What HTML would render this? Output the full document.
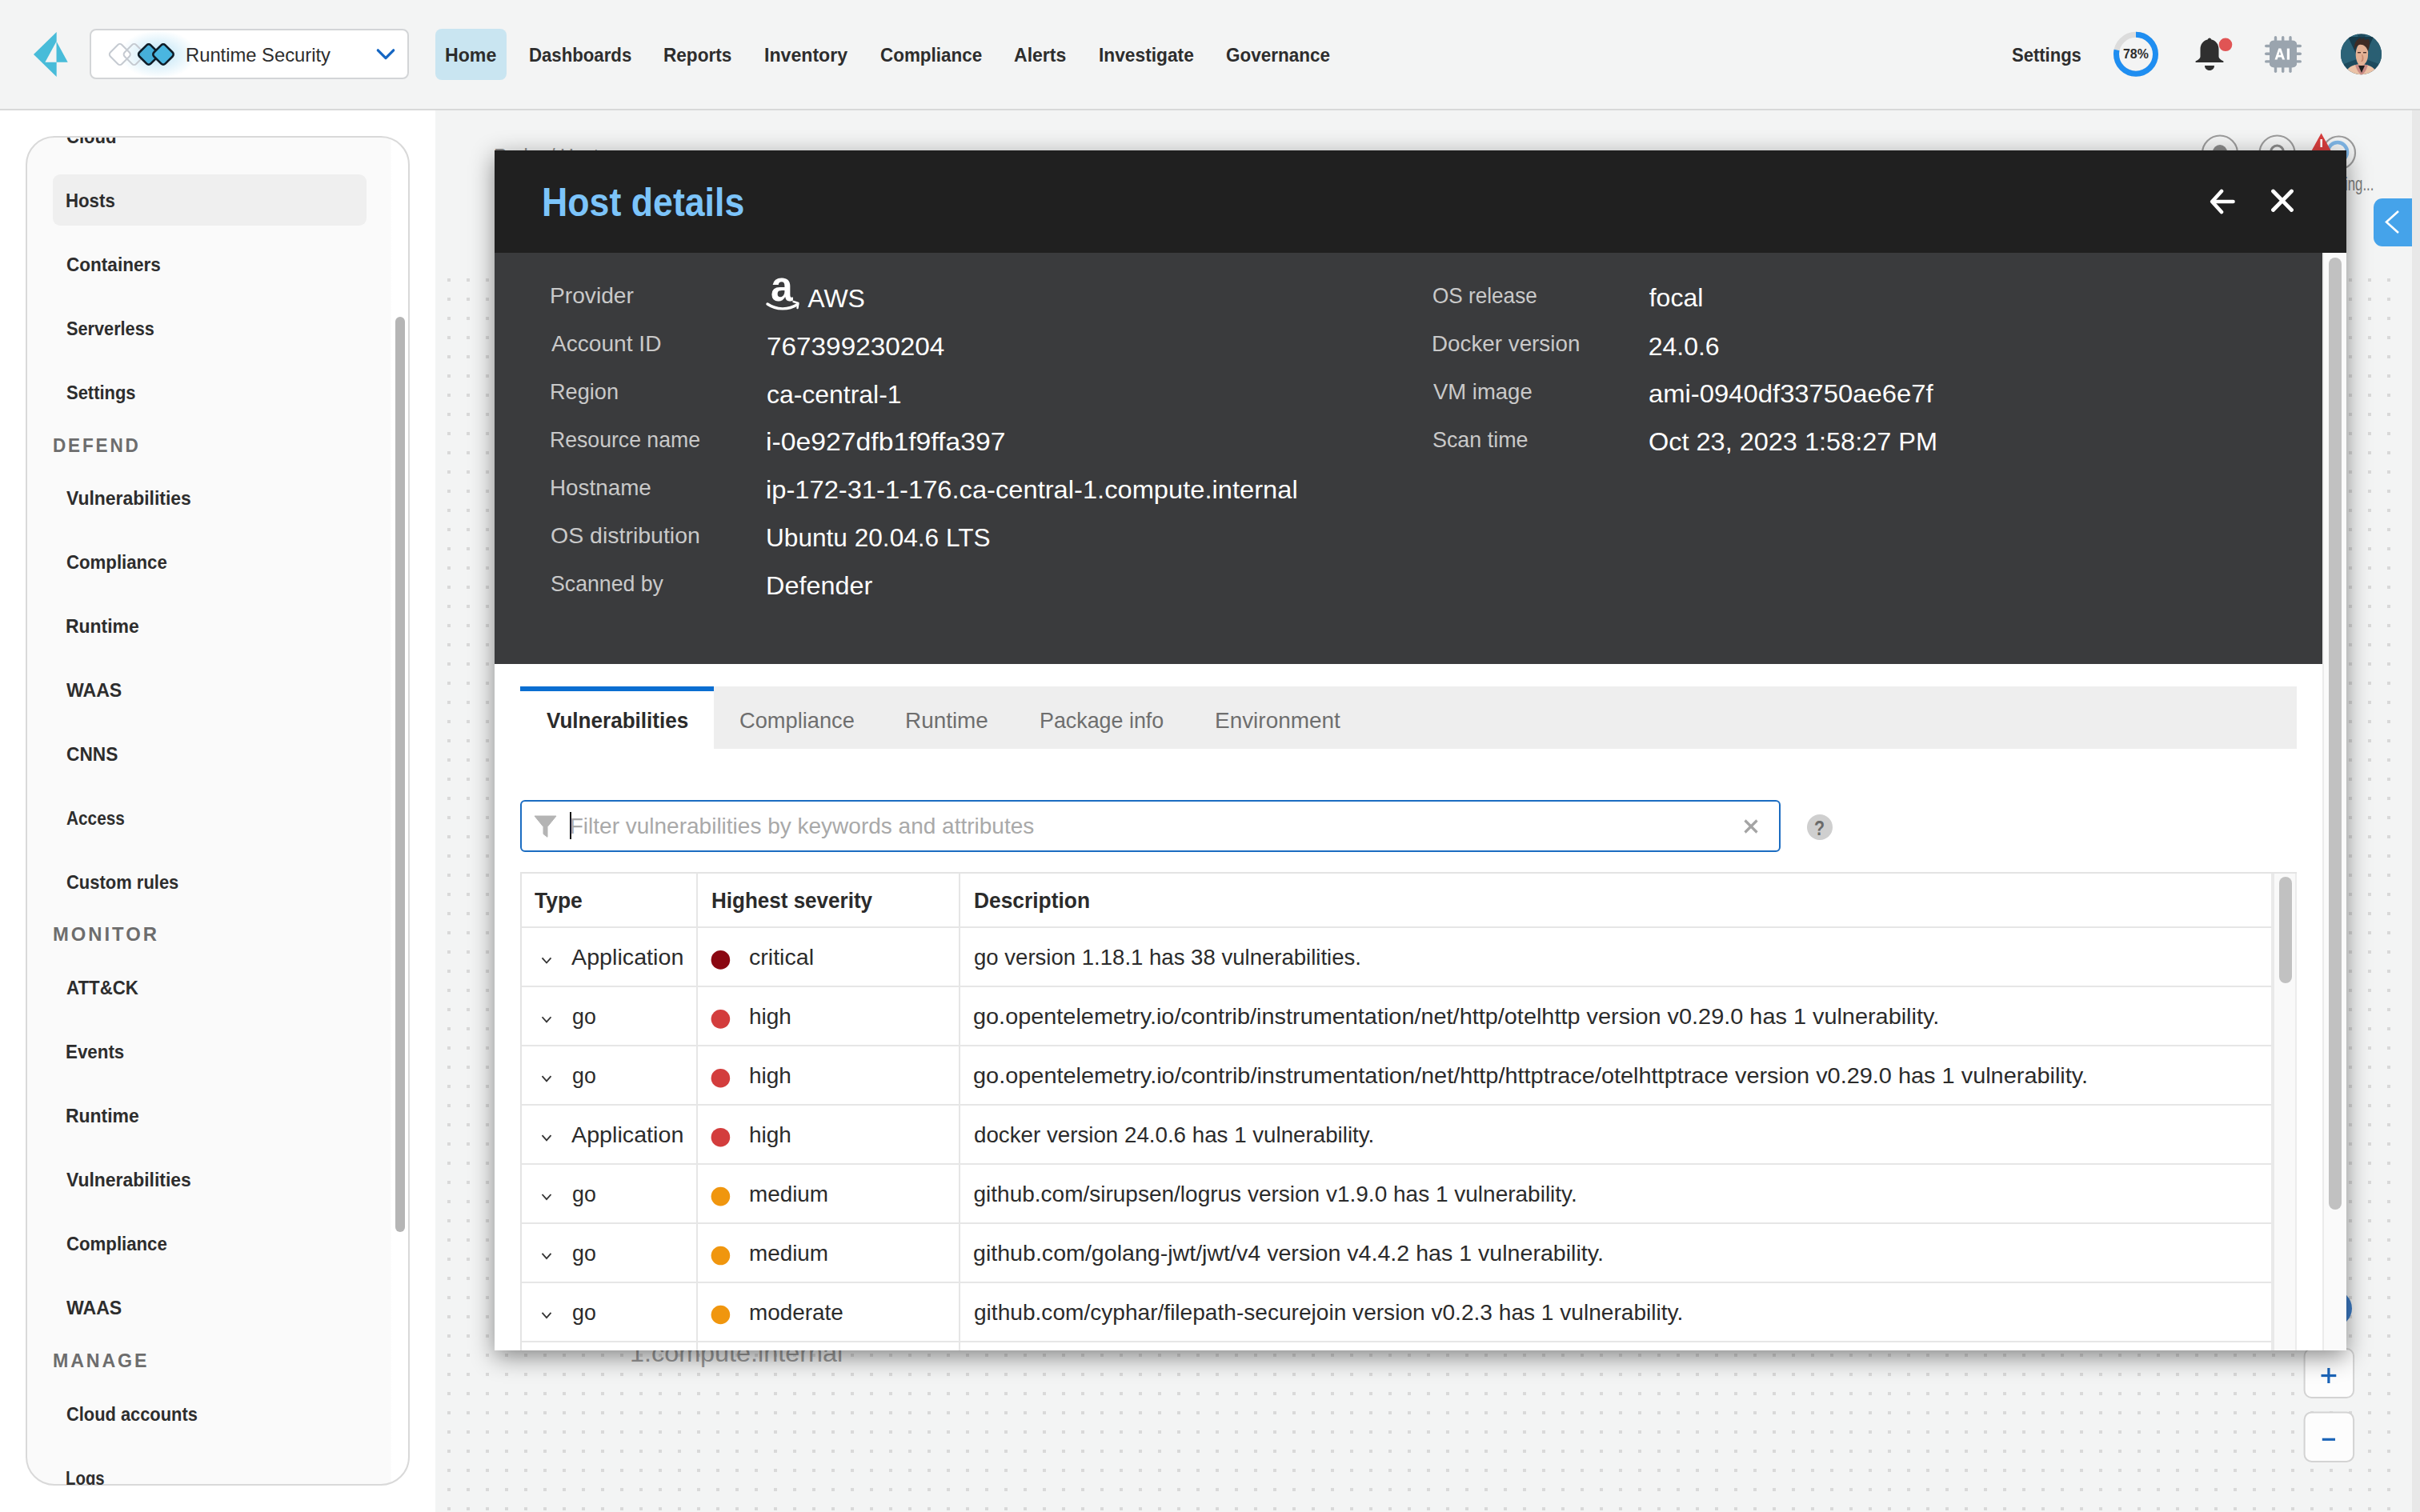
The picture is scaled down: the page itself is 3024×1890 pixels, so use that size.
<!DOCTYPE html>
<html><head><meta charset="utf-8"><title>Host details</title>
<style>
html,body{margin:0;padding:0}
body{width:3024px;height:1890px;position:relative;overflow:hidden;background:#ffffff;font-family:"Liberation Sans",sans-serif}
.a{position:absolute}
.t{position:absolute;white-space:nowrap;line-height:1;transform-origin:0 0;font-family:"Liberation Sans",sans-serif}
svg{position:absolute;overflow:visible}
</style></head><body>
<!-- ============ HEADER ============ -->
<div class="a" style="left:0;top:0;width:3024px;height:136px;background:#f3f4f4"></div>
<div class="a" style="left:0;top:136px;width:3024px;height:2px;background:#d8d9d9"></div>
<svg style="left:0;top:0" width="100" height="110">
 <polygon points="42,68 70.7,40 70.7,96" fill="#48bcd9"/>
 <polygon points="56.4,77.8 70.7,51.6 70.7,77.8" fill="#f3f4f4"/>
 <polygon points="70.7,52.1 84.7,77.8 70.7,77.8" fill="#48bcd9"/>
</svg>
<div class="a" style="left:112px;top:36px;width:395px;height:59px;border:2px solid #d3d5d7;border-radius:8px;background:#fff"></div>
<div class="a" style="left:150px;top:38px;width:96px;height:60px;background:radial-gradient(ellipse 48px 30px at 50% 50%,rgba(110,195,235,.55) 0%,rgba(110,195,235,.25) 45%,rgba(110,195,235,0) 100%)"></div>
<svg style="left:0;top:0" width="260" height="110">
 <g transform="translate(149.8,68) rotate(45)"><rect x="-10.2" y="-10.2" width="20.4" height="20.4" rx="3.5" fill="#fff" stroke="#c5cad1" stroke-width="2"/></g>
 <g transform="translate(167.6,68) rotate(45)"><rect x="-10.2" y="-10.2" width="20.4" height="20.4" rx="3.5" fill="none" stroke="#c5cad1" stroke-width="2"/></g>
 <g transform="translate(185.8,68) rotate(45)"><rect x="-10" y="-10" width="20" height="20" rx="3.5" fill="#46afd9" stroke="#0f1c27" stroke-width="2.6"/></g>
 <g transform="translate(204,68) rotate(45)"><rect x="-10" y="-10" width="20" height="20" rx="3.5" fill="#4ab6e0" stroke="#0f1c27" stroke-width="2.6"/></g>
 <polyline points="472.3,62.8 482,72.6 491.7,62.8" fill="none" stroke="#1667c3" stroke-width="3.3" stroke-linecap="round" stroke-linejoin="round"/>
</svg>
<div class="a" style="left:544px;top:36px;width:89px;height:64px;border-radius:8px;background:#c9e5f1"></div>
<svg style="left:2637px;top:36px" width="64" height="64">
 <circle cx="32" cy="31.75" r="24.5" fill="none" stroke="#dcdcdc" stroke-width="7"/>
 <circle cx="32" cy="31.75" r="24.5" fill="none" stroke="#1f8ef1" stroke-width="7" stroke-dasharray="120.1 200" transform="rotate(-90 32 31.75)"/>
</svg>
<svg style="left:2740px;top:44px" width="52" height="48">
 <path d="M21,3.6 C19.6,3.6 19,4.6 18.6,5.6 C13,6.8 9.5,11.5 9.5,17.5 L9.5,26.8 C9.5,28.8 7.5,30.6 4,32.3 C3,32.8 3.2,34 4.4,34 L37.6,34 C38.8,34 39,32.8 38,32.3 C34.5,30.6 32.5,28.8 32.5,26.8 L32.5,17.5 C32.5,11.5 29,6.8 23.4,5.6 C23,4.6 22.4,3.6 21,3.6 Z" fill="#2f2f2f"/>
 <path d="M15,38 L27,38 C27,41.5 24.5,44 21,44 C17.5,44 15,41.5 15,38 Z" fill="#2f2f2f"/>
 <circle cx="41" cy="11.8" r="8.3" fill="#e05454"/>
</svg>
<svg style="left:2826px;top:40px" width="56" height="56">
 <g fill="#9aa4ae">
  <rect x="10" y="10.8" width="34" height="33.5" rx="5"/>
  <rect x="15.8" y="5" width="3.4" height="46" rx="1.7"/>
  <rect x="25" y="5" width="3.4" height="46" rx="1.7"/>
  <rect x="34.3" y="5" width="3.4" height="46" rx="1.7"/>
  <rect x="4" y="15.8" width="46" height="3.4" rx="1.7"/>
  <rect x="4" y="25.5" width="46" height="3.4" rx="1.7"/>
  <rect x="4" y="35.2" width="46" height="3.4" rx="1.7"/>
  <rect x="10" y="10.8" width="34" height="33.5" rx="5"/>
 </g>
 <path d="M16.5,34.6 L21.3,20.6 L24.3,20.6 L29.1,34.6 L26,34.6 L25,31.4 L20.6,31.4 L19.6,34.6 Z M21.4,28.8 L24.2,28.8 L22.8,24.2 Z" fill="#fff"/>
 <rect x="31.8" y="20.6" width="3.2" height="14" fill="#fff"/>
</svg>
<svg style="left:2924px;top:42px" width="54" height="54">
 <defs>
  <clipPath id="avc"><circle cx="26.5" cy="25.8" r="25.5"/></clipPath>
 </defs>
 <circle cx="26.5" cy="25.8" r="25.5" fill="#1d4a5d"/>
 <g clip-path="url(#avc)">
  <polygon points="0,0 22,0 26,30 0,40" fill="#2c6378"/>
  <polygon points="54,0 32,0 27,30 54,40" fill="#2a5f73"/>
  <polygon points="10,4 26,38 42,4" fill="#163b4b"/>
  <path d="M6,54 C7,44 13,39 26,38 C39,39 46,44 47,54 Z" fill="#ebc2a6"/>
  <path d="M19,39 C21,46 24,50 27,52 C30,50 33,46 35,39 Z" fill="#c98b85"/>
  <path d="M23,40 L27,49 L31,40 Z" fill="#1e1e1e"/>
  <path d="M20,30 C19,22 21,13 27,12 C33,12 36,19 35,27 C35,33 32,39 27,40 C23,40 21,36 20,30 Z" fill="#e3b194"/>
  <path d="M27,26 C28,30 28,33 26,35 L28,35 C30,33 30,29 28,26 Z" fill="#c98a70"/>
  <path d="M18,20 C17,12 21,6 27,5 L25,8 L31,5 L30,8 L36,7 C38,11 37,17 35,22 C33,16 29,13 24,14 C21,15 19,17 18,20 Z" fill="#3e2b24"/>
  <rect x="22" y="23" width="4" height="1.4" fill="#4a302a"/><rect x="29" y="23" width="4" height="1.4" fill="#4a302a"/>
 </g>
</svg>
<div class="t" style="left:556.04px;top:56.72px;font-size:24px;font-weight:700;color:#2d2d2d;transform:scaleX(0.9643)">Home</div>
<div class="t" style="left:660.83px;top:56.72px;font-size:24px;font-weight:700;color:#2d2d2d;transform:scaleX(0.9246)">Dashboards</div>
<div class="t" style="left:829.06px;top:56.72px;font-size:24px;font-weight:700;color:#2d2d2d;transform:scaleX(0.9403)">Reports</div>
<div class="t" style="left:954.79px;top:56.72px;font-size:24px;font-weight:700;color:#2d2d2d;transform:scaleX(0.9635)">Inventory</div>
<div class="t" style="left:1099.60px;top:56.72px;font-size:24px;font-weight:700;color:#2d2d2d;transform:scaleX(0.9345)">Compliance</div>
<div class="t" style="left:1267.00px;top:56.72px;font-size:24px;font-weight:700;color:#2d2d2d;transform:scaleX(0.9604)">Alerts</div>
<div class="t" style="left:1372.55px;top:56.72px;font-size:24px;font-weight:700;color:#2d2d2d;transform:scaleX(0.9473)">Investigate</div>
<div class="t" style="left:1532.00px;top:56.72px;font-size:24px;font-weight:700;color:#2d2d2d;transform:scaleX(0.9366)">Governance</div>
<div class="t" style="left:2513.50px;top:56.72px;font-size:24px;font-weight:700;color:#2d2d2d;transform:scaleX(0.9170)">Settings</div>
<div class="t" style="left:231.51px;top:56.72px;font-size:24px;font-weight:400;color:#2d2d2d;transform:scaleX(0.9905)">Runtime Security</div>
<div class="t" style="left:2653.00px;top:58.84px;font-size:17px;font-weight:700;color:#2d2d2d;transform:scaleX(0.9349)">78%</div>
<!-- ============ LEFT SIDEBAR ============ -->
<div class="a" style="left:32px;top:170px;width:476px;height:1683px;border:2px solid #d9d9d9;border-radius:36px;background:linear-gradient(90deg,#fafafa 0,#fafafa 454px,#ffffff 455px)"></div>
<div class="a" style="left:66px;top:218px;width:392px;height:64px;border-radius:9px;background:#efefef"></div>
<div class="a" style="left:494px;top:396px;width:12px;height:1144px;border-radius:6px;background:#b5b5b5"></div>
<div class="a" style="left:0;top:0;width:544px;height:1890px;clip-path:inset(172px 0 34px 0)">
<div class="t" style="left:82.50px;top:158.72px;font-size:24px;font-weight:700;color:#2d2d2d;transform:scaleX(0.9210)">Cloud</div>
<div class="t" style="left:81.57px;top:238.72px;font-size:24px;font-weight:700;color:#2d2d2d;transform:scaleX(0.9260)">Hosts</div>
<div class="t" style="left:82.50px;top:318.72px;font-size:24px;font-weight:700;color:#2d2d2d;transform:scaleX(0.9399)">Containers</div>
<div class="t" style="left:82.50px;top:398.72px;font-size:24px;font-weight:700;color:#2d2d2d;transform:scaleX(0.9043)">Serverless</div>
<div class="t" style="left:82.50px;top:478.72px;font-size:24px;font-weight:700;color:#2d2d2d;transform:scaleX(0.9144)">Settings</div>
<div class="t" style="left:82.50px;top:610.72px;font-size:24px;font-weight:700;color:#2d2d2d;transform:scaleX(0.9551)">Vulnerabilities</div>
<div class="t" style="left:82.50px;top:690.72px;font-size:24px;font-weight:700;color:#2d2d2d;transform:scaleX(0.9249)">Compliance</div>
<div class="t" style="left:81.54px;top:770.72px;font-size:24px;font-weight:700;color:#2d2d2d;transform:scaleX(0.9561)">Runtime</div>
<div class="t" style="left:82.50px;top:850.72px;font-size:24px;font-weight:700;color:#2d2d2d;transform:scaleX(0.9619)">WAAS</div>
<div class="t" style="left:82.50px;top:930.72px;font-size:24px;font-weight:700;color:#2d2d2d;transform:scaleX(0.9449)">CNNS</div>
<div class="t" style="left:82.50px;top:1010.72px;font-size:24px;font-weight:700;color:#2d2d2d;transform:scaleX(0.8660)">Access</div>
<div class="t" style="left:82.50px;top:1090.72px;font-size:24px;font-weight:700;color:#2d2d2d;transform:scaleX(0.9149)">Custom rules</div>
<div class="t" style="left:82.50px;top:1223.22px;font-size:24px;font-weight:700;color:#2d2d2d;transform:scaleX(0.9279)">ATT&amp;CK</div>
<div class="t" style="left:81.57px;top:1303.22px;font-size:24px;font-weight:700;color:#2d2d2d;transform:scaleX(0.9308)">Events</div>
<div class="t" style="left:81.54px;top:1383.22px;font-size:24px;font-weight:700;color:#2d2d2d;transform:scaleX(0.9561)">Runtime</div>
<div class="t" style="left:82.50px;top:1463.22px;font-size:24px;font-weight:700;color:#2d2d2d;transform:scaleX(0.9551)">Vulnerabilities</div>
<div class="t" style="left:82.50px;top:1543.22px;font-size:24px;font-weight:700;color:#2d2d2d;transform:scaleX(0.9249)">Compliance</div>
<div class="t" style="left:82.50px;top:1623.22px;font-size:24px;font-weight:700;color:#2d2d2d;transform:scaleX(0.9619)">WAAS</div>
<div class="t" style="left:82.50px;top:1755.72px;font-size:24px;font-weight:700;color:#2d2d2d;transform:scaleX(0.9100)">Cloud accounts</div>
<div class="t" style="left:81.65px;top:1835.72px;font-size:24px;font-weight:700;color:#2d2d2d;transform:scaleX(0.8485)">Logs</div>
<div class="t" style="left:66.06px;top:544.72px;font-size:24px;font-weight:700;color:#6d6d6d;letter-spacing:3px;transform:scaleX(0.9391)">DEFEND</div>
<div class="t" style="left:66.01px;top:1156.22px;font-size:24px;font-weight:700;color:#6d6d6d;letter-spacing:3px;transform:scaleX(0.9919)">MONITOR</div>
<div class="t" style="left:66.03px;top:1689.22px;font-size:24px;font-weight:700;color:#6d6d6d;letter-spacing:3px;transform:scaleX(0.9656)">MANAGE</div>
</div>
<!-- ============ MAIN CANVAS ============ -->
<div class="a" style="left:544px;top:138px;width:2470px;height:1752px;background:#f3f4f4"></div>
<svg style="left:544px;top:340px" width="2456" height="1550">
 <defs><pattern id="dots" x="15" y="8" width="24" height="24" patternUnits="userSpaceOnUse"><rect width="4" height="4" fill="#d9d9d9"/></pattern></defs>
 <rect width="2456" height="1550" fill="url(#dots)"/>
</svg>
<div class="a" style="left:3014px;top:138px;width:10px;height:1752px;background:#e8e8e8"></div>
<svg style="left:2700px;top:150px" width="300" height="100">
 <circle cx="74" cy="41.5" r="22" fill="none" stroke="#9c9c9c" stroke-width="2.2"/>
 <circle cx="74" cy="40" r="9" fill="#8a8a8a"/>
 <circle cx="145.5" cy="41.5" r="22" fill="none" stroke="#9c9c9c" stroke-width="2.2"/>
 <circle cx="145.5" cy="40" r="8" fill="none" stroke="#8a8a8a" stroke-width="3"/>
 <circle cx="222.5" cy="41" r="20.5" fill="none" stroke="#9c9c9c" stroke-width="2.2"/>
 <circle cx="221" cy="40" r="12" fill="none" stroke="#7fb6e6" stroke-width="4.5"/>
 <polygon points="200.6,16.5 213,39 188.2,39" fill="#d83e3e"/>
 <rect x="199.4" y="24" width="2.6" height="10" fill="#fff"/>
</svg>
<div class="a" style="left:2966px;top:248px;width:48px;height:60px;border-radius:11px 0 0 11px;background:#45a3ea"></div>
<svg style="left:2960px;top:240px" width="60" height="80">
 <polyline points="37,24 22,37.5 37,51" fill="none" stroke="#fff" stroke-width="2.6"/>
</svg>
<svg style="left:2870px;top:1600px" width="100" height="240">
 <circle cx="46" cy="35.5" r="23" fill="#3d7cc6"/>
 <rect x="9.6" y="86" width="61.5" height="61" rx="9" fill="#fdfdfd" stroke="#d3d3d3" stroke-width="2"/>
 <rect x="9.6" y="165.4" width="61.5" height="61.5" rx="9" fill="#fdfdfd" stroke="#d3d3d3" stroke-width="2"/>
 <line x1="30.5" y1="119.5" x2="49.3" y2="119.5" stroke="#1b64b8" stroke-width="3.2"/>
 <line x1="39.9" y1="110" x2="39.9" y2="129" stroke="#1b64b8" stroke-width="3.2"/>
 <line x1="31.8" y1="199.3" x2="48" y2="199.3" stroke="#1b64b8" stroke-width="3.2"/>
</svg>
<div class="t" style="left:616.70px;top:181.53px;font-size:26px;font-weight:400;color:#8a8a8a;transform:scaleX(0.8984)">Radar / Hosts</div>
<div class="t" style="left:2930.00px;top:217.72px;font-size:24px;font-weight:400;color:#7a7a7a;transform:scaleX(0.6989)">ing...</div>
<div class="t" style="left:787.48px;top:1675.46px;font-size:32px;font-weight:400;color:#9a9a9a;transform:scaleX(1.0110)">1.compute.internal</div>
<!-- ============ MODAL ============ -->
<div class="a" style="left:618px;top:188px;width:2314px;height:1500px;background:#fff;box-shadow:0 8px 28px rgba(0,0,0,.45)"></div>
<div class="a" style="left:618px;top:188px;width:2314px;height:1500px;overflow:hidden;background:#fff">
<div class="a" style="left:-618px;top:-188px;width:3024px;height:1890px">
 <div class="a" style="left:618px;top:188px;width:2314px;height:128px;background:#202020"></div>
 <div class="a" style="left:618px;top:316px;width:2284px;height:514px;background:#3a3b3d"></div>
 <svg style="left:2740px;top:220px" width="150" height="64">
  <polyline points="36,19 24.2,32 36,45" fill="none" stroke="#fff" stroke-width="4.6" stroke-linecap="round" stroke-linejoin="round"/>
  <line x1="25" y1="32" x2="50.5" y2="32" stroke="#fff" stroke-width="4.6" stroke-linecap="round"/>
  <line x1="100.5" y1="19" x2="123.5" y2="42.5" stroke="#fff" stroke-width="4.8" stroke-linecap="round"/>
  <line x1="123.5" y1="19" x2="100.5" y2="42.5" stroke="#fff" stroke-width="4.8" stroke-linecap="round"/>
 </svg>
 <svg style="left:950px;top:340px" width="60" height="60">
  <path d="M9,40 C20,47.5 35,48 46.5,40.5" fill="none" stroke="#fff" stroke-width="3.4" stroke-linecap="round"/>
  <path d="M41.5,37 L47.5,38.8 L46.5,45" fill="none" stroke="#fff" stroke-width="2.4" stroke-linecap="round" stroke-linejoin="round"/>
 </svg>
 <div class="t" style="left:962.5px;top:330px;font-size:54px;font-weight:700;color:#fff;transform:scaleX(0.92)">a</div>
 <!-- scroll track -->
 <div class="a" style="left:2902px;top:316px;width:28px;height:1372px;border-left:2px solid #ebebeb;background:#fafafa"></div>
 <div class="a" style="left:2910px;top:322px;width:16px;height:1190px;border-radius:8px;background:#c1c1c1"></div>
 <!-- tabs -->
 <div class="a" style="left:650px;top:858px;width:2220px;height:78px;background:#eeeeee"></div>
 <div class="a" style="left:650px;top:858px;width:242px;height:78px;background:#ffffff"></div>
 <div class="a" style="left:650px;top:858px;width:242px;height:5.5px;background:#0a6ed1"></div>
 <!-- filter -->
 <div class="a" style="left:650px;top:1000px;width:1571px;height:61px;border:2px solid #1b6cc1;border-radius:6px;background:#fff"></div>
 <svg style="left:660px;top:1010px" width="44" height="44">
  <polygon points="8,10 35,10 24,23.5 24,36.3 19,32.5 19,23.5" fill="#b4b4b4" stroke="#b4b4b4" stroke-width="1" stroke-linejoin="round"/>
 </svg>
 <div class="a" style="left:712px;top:1015px;width:2px;height:34px;background:#141414"></div>
 <svg style="left:2170px;top:1015px" width="40" height="40">
  <line x1="10.5" y1="10.5" x2="25.5" y2="25.5" stroke="#a4a4a4" stroke-width="3.2"/>
  <line x1="25.5" y1="10.5" x2="10.5" y2="25.5" stroke="#a4a4a4" stroke-width="3.2"/>
 </svg>
 <div class="a" style="left:2257.75px;top:1018px;width:32px;height:32px;border-radius:50%;background:#cfcfcf"></div>
 <!-- table -->
 <div class="a" style="left:650px;top:1090px;width:2220px;height:2px;background:#e4e4e4"></div>
 <div class="a" style="left:650px;top:1090px;width:2px;height:600px;background:#e4e4e4"></div>
 <div class="a" style="left:2838px;top:1092px;width:4px;height:600px;background:#e9e9e9"></div>
 <div class="a" style="left:2842px;top:1092px;width:26px;height:600px;background:#f9f9f9"></div>
 <div class="a" style="left:2868px;top:1092px;width:2px;height:600px;background:#ececec"></div>
 <div class="a" style="left:2848px;top:1096px;width:16px;height:133px;border-radius:8px;background:#c1c1c1"></div>
 <div class="a" style="left:869.5px;top:1092px;width:2px;height:600px;background:#e6e6e6"></div>
 <div class="a" style="left:1197.75px;top:1092px;width:2px;height:600px;background:#e6e6e6"></div>
<div class="a" style="left:652px;top:1158.00px;width:2186px;height:2px;background:#e6e6e6"></div>
<div class="a" style="left:652px;top:1232.10px;width:2186px;height:2px;background:#e6e6e6"></div>
<div class="a" style="left:652px;top:1306.03px;width:2186px;height:2px;background:#e6e6e6"></div>
<div class="a" style="left:652px;top:1379.96px;width:2186px;height:2px;background:#e6e6e6"></div>
<div class="a" style="left:652px;top:1453.89px;width:2186px;height:2px;background:#e6e6e6"></div>
<div class="a" style="left:652px;top:1527.82px;width:2186px;height:2px;background:#e6e6e6"></div>
<div class="a" style="left:652px;top:1601.75px;width:2186px;height:2px;background:#e6e6e6"></div>
<div class="a" style="left:652px;top:1675.68px;width:2186px;height:2px;background:#e6e6e6"></div>
<svg style="left:0;top:0" width="3024" height="1890">
<polyline points="677.5,1197.30 683,1203.50 688.5,1197.30" fill="none" stroke="#333" stroke-width="1.8"/>
<circle cx="900.4" cy="1199.90" r="11.8" fill="#8a0812"/>
<polyline points="677.5,1271.23 683,1277.43 688.5,1271.23" fill="none" stroke="#333" stroke-width="1.8"/>
<circle cx="900.4" cy="1273.83" r="11.8" fill="#d33d3d"/>
<polyline points="677.5,1345.16 683,1351.36 688.5,1345.16" fill="none" stroke="#333" stroke-width="1.8"/>
<circle cx="900.4" cy="1347.76" r="11.8" fill="#d33d3d"/>
<polyline points="677.5,1419.09 683,1425.29 688.5,1419.09" fill="none" stroke="#333" stroke-width="1.8"/>
<circle cx="900.4" cy="1421.69" r="11.8" fill="#d33d3d"/>
<polyline points="677.5,1493.02 683,1499.22 688.5,1493.02" fill="none" stroke="#333" stroke-width="1.8"/>
<circle cx="900.4" cy="1495.62" r="11.8" fill="#f0960e"/>
<polyline points="677.5,1566.95 683,1573.15 688.5,1566.95" fill="none" stroke="#333" stroke-width="1.8"/>
<circle cx="900.4" cy="1569.55" r="11.8" fill="#f0960e"/>
<polyline points="677.5,1640.88 683,1647.08 688.5,1640.88" fill="none" stroke="#333" stroke-width="1.8"/>
<circle cx="900.4" cy="1643.48" r="11.8" fill="#f0960e"/>
</svg>
<div class="t" style="left:677.32px;top:228.25px;font-size:50px;font-weight:700;color:#7cc4fa;transform:scaleX(0.8938)">Host details</div>
<div class="t" style="left:686.74px;top:355.84px;font-size:28px;font-weight:400;color:#c9c9c9;transform:scaleX(1.0055)">Provider</div>
<div class="t" style="left:688.75px;top:416.34px;font-size:28px;font-weight:400;color:#c9c9c9;transform:scaleX(1.0038)">Account ID</div>
<div class="t" style="left:686.81px;top:476.34px;font-size:28px;font-weight:400;color:#c9c9c9;transform:scaleX(0.9688)">Region</div>
<div class="t" style="left:686.85px;top:536.34px;font-size:28px;font-weight:400;color:#c9c9c9;transform:scaleX(0.9509)">Resource name</div>
<div class="t" style="left:686.76px;top:595.84px;font-size:28px;font-weight:400;color:#c9c9c9;transform:scaleX(0.9937)">Hostname</div>
<div class="t" style="left:687.73px;top:655.84px;font-size:28px;font-weight:400;color:#c9c9c9;transform:scaleX(1.0176)">OS distribution</div>
<div class="t" style="left:687.80px;top:715.84px;font-size:28px;font-weight:400;color:#c9c9c9;transform:scaleX(0.9531)">Scanned by</div>
<div class="t" style="left:1009.25px;top:356.71px;font-size:32px;font-weight:400;color:#ffffff">AWS</div>
<div class="t" style="left:957.96px;top:416.71px;font-size:32px;font-weight:400;color:#ffffff;transform:scaleX(1.0412)">767399230204</div>
<div class="t" style="left:958.00px;top:476.71px;font-size:32px;font-weight:400;color:#ffffff;transform:scaleX(0.9976)">ca-central-1</div>
<div class="t" style="left:956.89px;top:536.21px;font-size:32px;font-weight:400;color:#ffffff;transform:scaleX(1.0540)">i-0e927dfb1f9ffa397</div>
<div class="t" style="left:956.96px;top:596.21px;font-size:32px;font-weight:400;color:#ffffff;transform:scaleX(1.0210)">ip-172-31-1-176.ca-central-1.compute.internal</div>
<div class="t" style="left:957.02px;top:656.21px;font-size:32px;font-weight:400;color:#ffffff;transform:scaleX(0.9877)">Ubuntu 20.04.6 LTS</div>
<div class="t" style="left:956.98px;top:716.21px;font-size:32px;font-weight:400;color:#ffffff;transform:scaleX(1.0117)">Defender</div>
<div class="t" style="left:1790.07px;top:356.34px;font-size:28px;font-weight:400;color:#c9c9c9;transform:scaleX(0.9336)">OS release</div>
<div class="t" style="left:1789.01px;top:415.94px;font-size:28px;font-weight:400;color:#c9c9c9;transform:scaleX(0.9926)">Docker version</div>
<div class="t" style="left:1791.00px;top:476.34px;font-size:28px;font-weight:400;color:#c9c9c9;transform:scaleX(0.9811)">VM image</div>
<div class="t" style="left:1790.04px;top:535.94px;font-size:28px;font-weight:400;color:#c9c9c9;transform:scaleX(0.9599)">Scan time</div>
<div class="t" style="left:2060.70px;top:356.36px;font-size:32px;font-weight:400;color:#ffffff">focal</div>
<div class="t" style="left:2059.70px;top:416.76px;font-size:32px;font-weight:400;color:#ffffff">24.0.6</div>
<div class="t" style="left:2059.67px;top:475.76px;font-size:32px;font-weight:400;color:#ffffff;transform:scaleX(1.0252)">ami-0940df33750ae6e7f</div>
<div class="t" style="left:2059.69px;top:536.16px;font-size:32px;font-weight:400;color:#ffffff;transform:scaleX(1.0147)">Oct 23, 2023 1:58:27 PM</div>
<div class="t" style="left:682.50px;top:886.84px;font-size:28px;font-weight:700;color:#2b2b2b;transform:scaleX(0.9313)">Vulnerabilities</div>
<div class="t" style="left:924.03px;top:886.84px;font-size:28px;font-weight:400;color:#6e6e6e;transform:scaleX(0.9725)">Compliance</div>
<div class="t" style="left:1131.26px;top:886.84px;font-size:28px;font-weight:400;color:#6e6e6e;transform:scaleX(0.9957)">Runtime</div>
<div class="t" style="left:1298.58px;top:886.84px;font-size:28px;font-weight:400;color:#6e6e6e;transform:scaleX(0.9588)">Package info</div>
<div class="t" style="left:1518.01px;top:886.84px;font-size:28px;font-weight:400;color:#6e6e6e;transform:scaleX(0.9974)">Environment</div>
<div class="t" style="left:711.75px;top:1018.84px;font-size:28px;font-weight:400;color:#a9a9a9">Filter vulnerabilities by keywords and attributes</div>
<div class="t" style="left:668.00px;top:1112.24px;font-size:28px;font-weight:700;color:#2b2b2b;transform:scaleX(0.9450)">Type</div>
<div class="t" style="left:889.07px;top:1112.24px;font-size:28px;font-weight:700;color:#2b2b2b;transform:scaleX(0.9293)">Highest severity</div>
<div class="t" style="left:1216.56px;top:1112.24px;font-size:28px;font-weight:700;color:#2b2b2b;transform:scaleX(0.9413)">Description</div>
<div class="t" style="left:714.25px;top:1183.34px;font-size:28px;font-weight:400;color:#2b2b2b;transform:scaleX(1.0247)">Application</div>
<div class="t" style="left:935.73px;top:1183.34px;font-size:28px;font-weight:400;color:#2b2b2b;transform:scaleX(1.0212)">critical</div>
<div class="t" style="left:1216.52px;top:1183.34px;font-size:28px;font-weight:400;color:#2b2b2b;transform:scaleX(0.9840)">go version 1.18.1 has 38 vulnerabilities.</div>
<div class="t" style="left:715.04px;top:1257.27px;font-size:28px;font-weight:400;color:#2b2b2b;transform:scaleX(0.9553)">go</div>
<div class="t" style="left:935.75px;top:1257.27px;font-size:28px;font-weight:400;color:#2b2b2b;transform:scaleX(0.9977)">high</div>
<div class="t" style="left:1216.47px;top:1257.27px;font-size:28px;font-weight:400;color:#2b2b2b;transform:scaleX(1.0310)">go.opentelemetry.io/contrib/instrumentation/net/http/otelhttp version v0.29.0 has 1 vulnerability.</div>
<div class="t" style="left:715.04px;top:1331.20px;font-size:28px;font-weight:400;color:#2b2b2b;transform:scaleX(0.9553)">go</div>
<div class="t" style="left:935.75px;top:1331.20px;font-size:28px;font-weight:400;color:#2b2b2b;transform:scaleX(0.9977)">high</div>
<div class="t" style="left:1216.47px;top:1331.20px;font-size:28px;font-weight:400;color:#2b2b2b;transform:scaleX(1.0320)">go.opentelemetry.io/contrib/instrumentation/net/http/httptrace/otelhttptrace version v0.29.0 has 1 vulnerability.</div>
<div class="t" style="left:714.25px;top:1405.13px;font-size:28px;font-weight:400;color:#2b2b2b;transform:scaleX(1.0247)">Application</div>
<div class="t" style="left:935.75px;top:1405.13px;font-size:28px;font-weight:400;color:#2b2b2b;transform:scaleX(0.9977)">high</div>
<div class="t" style="left:1216.51px;top:1405.13px;font-size:28px;font-weight:400;color:#2b2b2b;transform:scaleX(0.9900)">docker version 24.0.6 has 1 vulnerability.</div>
<div class="t" style="left:715.04px;top:1479.06px;font-size:28px;font-weight:400;color:#2b2b2b;transform:scaleX(0.9553)">go</div>
<div class="t" style="left:935.76px;top:1479.06px;font-size:28px;font-weight:400;color:#2b2b2b;transform:scaleX(0.9947)">medium</div>
<div class="t" style="left:1216.50px;top:1479.06px;font-size:28px;font-weight:400;color:#2b2b2b">github.com/sirupsen/logrus version v1.9.0 has 1 vulnerability.</div>
<div class="t" style="left:715.04px;top:1552.99px;font-size:28px;font-weight:400;color:#2b2b2b;transform:scaleX(0.9553)">go</div>
<div class="t" style="left:935.76px;top:1552.99px;font-size:28px;font-weight:400;color:#2b2b2b;transform:scaleX(0.9947)">medium</div>
<div class="t" style="left:1216.48px;top:1552.99px;font-size:28px;font-weight:400;color:#2b2b2b;transform:scaleX(1.0213)">github.com/golang-jwt/jwt/v4 version v4.4.2 has 1 vulnerability.</div>
<div class="t" style="left:715.04px;top:1626.92px;font-size:28px;font-weight:400;color:#2b2b2b;transform:scaleX(0.9553)">go</div>
<div class="t" style="left:935.75px;top:1626.92px;font-size:28px;font-weight:400;color:#2b2b2b;transform:scaleX(0.9964)">moderate</div>
<div class="t" style="left:1216.50px;top:1626.92px;font-size:28px;font-weight:400;color:#2b2b2b;transform:scaleX(1.0032)">github.com/cyphar/filepath-securejoin version v0.2.3 has 1 vulnerability.</div>
<div class="t" style="left:2267.18px;top:1021.53px;font-size:26px;font-weight:700;color:#6a6a6a;transform:scaleX(0.8214)">?</div>
</div></div>
<script>(function(){var w=window.innerWidth;if(w&&Math.abs(w-3024)>2){document.documentElement.style.zoom=(w/3024);}})();</script>
</body></html>
